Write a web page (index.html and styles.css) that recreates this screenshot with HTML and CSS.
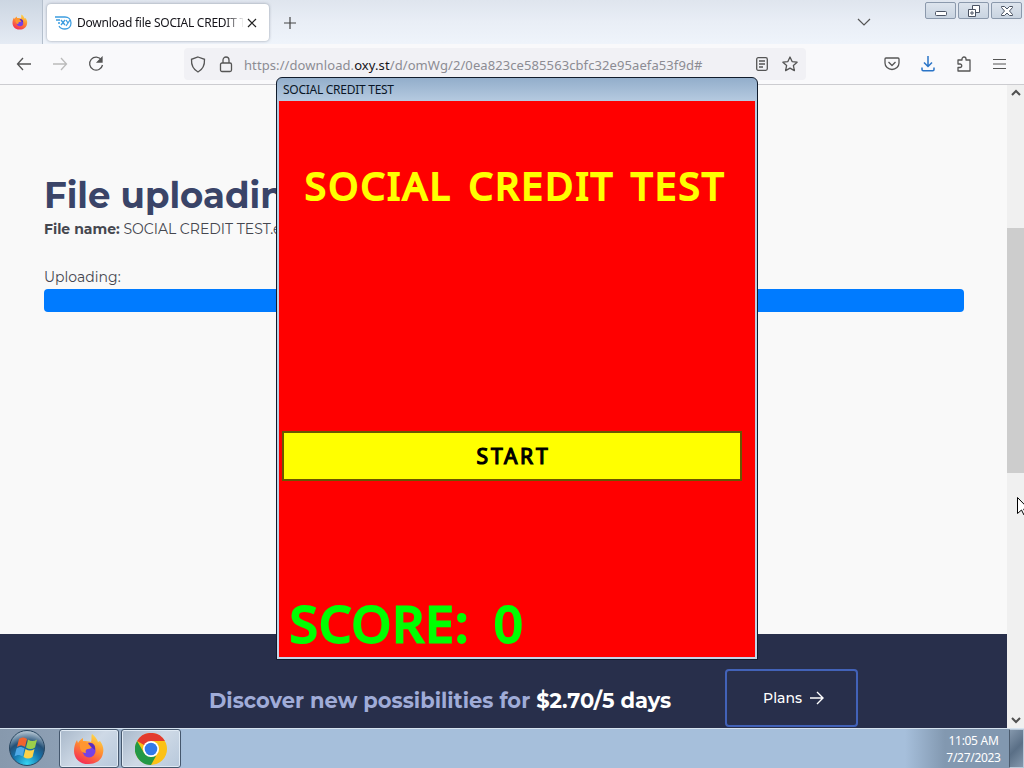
FILE: index.html
```
<!DOCTYPE html>
<html lang="en">

<head>
  <meta charset="UTF-8" />
  <meta name="viewport" content="width=device-width, initial-scale=1.0" />
  <title>Social Credit Test</title>
  <link rel="stylesheet" href="styles.css">
</head>

<body>
  <svg class="defs" width="0" height="0">
    <defs>
      <linearGradient id="flame" x1="0.8" y1="0" x2="0.3" y2="1">
        <stop offset="0" stop-color="#ffe14a" />
        <stop offset="0.45" stop-color="#ff9130" />
        <stop offset="1" stop-color="#f52b55" />
      </linearGradient>
      <symbol id="firefox" viewBox="0 0 32 32">
        <path fill="url(#flame)" d="M19 1c3 2 5 5 6 8l2-1c3 4 4 8 3 12-1 7-7 11-14 11C8 32 1 26 1 18c0-4 1-8 3-11l1 3c1-2 3-4 5-5v3c3 0 6 0 8 1 1-3 0-6 1-8z" />
        <circle cx="16" cy="18" r="6.5" fill="#7542e5" />
        <path fill="#ff9630" d="M7 10c3-2 7-1 9 2l4 1c-1 2-3 3-5 3-2 0-3 2-2 4-4 0-7-3-6-10z" />
        <path fill="#5b2bc0" d="M15 10c5-1 8 3 7 7l-4-3z" />
      </symbol>
    </defs>
  </svg>

  <div class="desktop">
    <div class="browser">
      <div class="tabbar">
        <div class="pinned"><svg width="16" height="16"><use href="#firefox" /></svg></div>
        <div class="tab">
          <svg width="17" height="16" viewBox="0 0 17 16" fill="none" stroke="#3c9de0" stroke-width="1.3">
            <path d="M0 2h10c3 0 6 2 6 6s-3 6-6 6c-3 0-5-1-6-3M1 5h4M3 8h2" />
            <path d="M6 5l4 5M10 5l-4 5M11 5l2 3M15 5l-4 6" />
          </svg>
          <span class="tab-title">Download file SOCIAL CREDIT TEST</span>
          <svg class="tab-close" width="10" height="10" viewBox="0 0 10 10" stroke="#222" stroke-width="1.2"><path d="M1 1l8 8M9 1l-8 8" /></svg>
        </div>
        <svg class="newtab" width="12" height="12" viewBox="0 0 12 12" stroke="#444" stroke-width="1.2"><path d="M6 0v12M0 6h12" /></svg>
        <svg class="alltabs" width="14" height="8" viewBox="0 0 14 8" fill="none" stroke="#555" stroke-width="1.2"><path d="M1 1l6 6 6-6" /></svg>
        <div class="winbtns">
          <span><svg width="12" height="12" viewBox="0 0 12 12"><rect x="0.5" y="6.5" width="11" height="4" rx="1" fill="#fff" stroke="#4a5363" /></svg></span>
          <span><svg width="12" height="12" viewBox="0 0 12 12" fill="#fff" stroke="#4a5363"><path d="M4.5.5h7v7h-7z" /><path d="M.5 4.5h7v7h-7zM3 7h2v2h-2z" /></svg></span>
          <span><svg width="12" height="12" viewBox="0 0 12 12" fill="#fff" stroke="#4a5363"><path d="M.5 1.5h3l2.5 2.5 2.5-2.5h3v1l-3 3.500 3 3.500v1h-3l-2.500-2.500-2.500 2.500h-3v-1l3-3.500-3-3.500z" /></svg></span>
        </div>
      </div>

      <div class="toolbar">
        <div class="nav">
          <svg width="16" height="14" viewBox="0 0 16 14" fill="none" stroke="#555" stroke-width="1.3"><path d="M15 7H1.500M7 1L1.500 7 7 13" /></svg>
          <svg width="16" height="14" viewBox="0 0 16 14" fill="none" stroke="#bbb" stroke-width="1.3"><path d="M1 7h13.500M9 1l5.500 6L9 13" /></svg>
          <svg width="16" height="16" viewBox="0 0 16 16" fill="none" stroke="#555" stroke-width="1.3"><path d="M13.500 4A6.500 6.500 0 1 0 14.500 9" /><path fill="#555" d="M14 1.500v4.500h-4.500z" /></svg>
        </div>
        <div class="urlbar">
          <svg width="16" height="17" viewBox="0 0 16 17" fill="none" stroke="#555" stroke-width="1.3"><path d="M8 1l6.500 2.300c.3 5.500-1.500 10-6.500 12.700C3 13.300 1.200 8.800 1.500 3.300z" /></svg>
          <svg width="14" height="17" viewBox="0 0 14 17" fill="none" stroke="#555" stroke-width="1.3"><rect x="1.5" y="7" width="11" height="8.5" rx="1.5" /><path d="M4 7V4a3 3 0 0 1 6 0v3" /></svg>
          <span class="url">https://download.<b>oxy.st</b>/d/omWg/2/0ea823ce585563cbfc32e95aefa53f9d#</span>
          <svg width="12" height="14" viewBox="0 0 12 14" fill="none" stroke="#555" stroke-width="1.3"><rect x="0.7" y="0.7" width="10.6" height="12.6" rx="1.5" /><path d="M3 4h6M3 7h6M3 10h4" /></svg>
          <svg width="16" height="16" viewBox="0 0 16 16" fill="none" stroke="#555" stroke-width="1.3" stroke-linejoin="round"><path d="M8 1l2.100 4.600 5 .6-3.700 3.400 1 5L8 12.100l-4.400 2.500 1-5L.9 6.200l5-.6z" /></svg>
        </div>
        <div class="tools">
          <svg width="16" height="14" viewBox="0 0 16 14" fill="none" stroke="#555" stroke-width="1.3" stroke-linejoin="round"><path d="M2 1h12q1 0 1 1v4a7 6.500 0 0 1-14 0V2q0-1 1-1z" /><path d="M4.500 5L8 8.500 11.500 5" /></svg>
          <svg width="14" height="16" viewBox="0 0 14 16" fill="none" stroke="#2a74c7" stroke-width="1.5"><path d="M7 0v10.500M3 6.500l4 4 4-4M1 11.500v2q0 1.200 1.200 1.200h9.600q1.200 0 1.200-1.200v-2" /></svg>
          <svg width="16" height="16" viewBox="0 0 16 16" fill="none" stroke="#555" stroke-width="1.3" stroke-linejoin="round"><path d="M2 6V4h4V3a2 2 0 0 1 4 0v1h4v11H2v-3.500h2a1.500 1.500 0 0 0 0-3.500H2z" /></svg>
          <svg width="13" height="12" viewBox="0 0 13 12" stroke="#555" stroke-width="1.2"><path d="M0 1.500h13M0 6h13M0 10.500h13" /></svg>
        </div>
      </div>

      <div class="view">
        <div class="page">
          <div class="upload">
            <h1>File uploading</h1>
            <p class="filename"><b>File name:</b> SOCIAL CREDIT TEST.exe</p>
            <p class="status">Uploading:</p>
            <div class="progress"></div>
          </div>
          <div class="promo">
            <p>Discover new possibilities for <b>$2.70/5 days</b></p>
            <a class="plans">Plans
              <svg width="14" height="14" viewBox="0 0 14 14" fill="none" stroke="#fff" stroke-width="1.4"><path d="M0 7h13M7 1l6 6-6 6" /></svg>
            </a>
          </div>
        </div>
        <div class="scrollbar">
          <svg width="10" height="7" viewBox="0 0 10 7" fill="none" stroke="#505050" stroke-width="2"><path d="M1 6l4-4 4 4" /></svg>
          <div class="thumb"></div>
          <svg width="10" height="7" viewBox="0 0 10 7" fill="none" stroke="#505050" stroke-width="2"><path d="M1 1l4 4 4-4" /></svg>
        </div>
      </div>
    </div>

    <div class="taskbar">
      <div class="start">
        <svg width="38" height="38" viewBox="0 0 38 38">
          <defs>
            <radialGradient id="orb" cx="0.5" cy="0.95" r="0.9">
              <stop offset="0" stop-color="#35d5f2" />
              <stop offset="0.45" stop-color="#1573ac" />
              <stop offset="0.7" stop-color="#245178" />
              <stop offset="1" stop-color="#a9bccb" />
            </radialGradient>
          </defs>
          <circle cx="19" cy="19" r="17.5" fill="url(#orb)" stroke="#294761" />
          <path fill="#f0652f" d="M11 10c3-2 5-2 8 0l-2 8c-3-2-5-2-8 0z" />
          <path fill="#9bcf4b" d="M20 10.500c3 2 6 2 9 0l-2 8c-3 2-6 2-9 0z" />
          <path fill="#4fa9e6" d="M8.500 19.500c3-2 5-2 8 0l-2 8c-3-2-5-2-8 0z" />
          <path fill="#fdd249" d="M17.500 20c3 2 6 2 9 0l-2 8c-3 2-6 2-9 0z" />
        </svg>
      </div>
      <div class="task"><svg width="32" height="32"><use href="#firefox" /></svg></div>
      <div class="task">
        <svg width="32" height="32" viewBox="0 0 32 32">
          <circle cx="16" cy="16" r="16" fill="#fbc116" />
          <path fill="#e33b2e" d="M16 16L2.100 8A16 16 0 0 1 29.900 8H16z" />
          <path fill="#229847" d="M2.100 8l7 12 6.900 4 5-1L16 32A16 16 0 0 1 2.100 8z" />
          <circle cx="16" cy="16" r="8" fill="#fff" />
          <circle cx="16" cy="16" r="6.3" fill="#3279e8" />
        </svg>
      </div>
      <div class="clock"><span>11:05 AM</span><span>7/27/2023</span></div>
      <div class="peek"></div>
    </div>

    <div class="popup">
      <div class="popup-title">SOCIAL CREDIT TEST</div>
      <div class="game">
        <h2>SOCIAL CREDIT TEST</h2>
        <button type="button" class="startbtn">START</button>
        <p class="score">SCORE: 0</p>
      </div>
    </div>

    <svg class="cursor" width="12" height="19" viewBox="0 0 12 19"><path fill="#fff" stroke="#000" d="M.5.5v16l4-3.500 2.500 5 2-1-2.300-5h5z" /></svg>
  </div>
</body>

</html>
```
FILE: styles.css
```
* {
  box-sizing: border-box;
}

body {
  margin: 0;
  font-family: "Noto Sans", sans-serif;
}

h1,
h2,
p {
  margin: 0;
}

svg {
  display: block;
  flex-shrink: 0;
}

.defs {
  position: absolute;
}

.desktop {
  position: relative;
  display: flex;
  flex-direction: column;
  width: 1024px;
  height: 768px;
  overflow: hidden;
}

.browser {
  display: flex;
  flex-direction: column;
  height: 728px;
}

/* tabs */
.tabbar {
  display: flex;
  height: 44px;
  background: linear-gradient(#dfe5ee, #e9eef6 50%, #eff4fb);
}

.pinned {
  display: flex;
  align-items: center;
  justify-content: center;
  width: 43px;
  padding-right: 3px;
  border-right: 1px solid #b4bfcc;
  background: linear-gradient(#ccd6e2, #e5ebf4);
}

.tab {
  display: flex;
  align-items: center;
  width: 222px;
  height: 37px;
  margin: 4px 0 0 4px;
  padding: 0 11px 0 8px;
  border-radius: 4px;
  background: #fff;
  box-shadow: 0 0 3px rgba(60, 70, 90, 0.5);
}

.tab-title {
  width: 166px;
  margin-left: 5px;
  overflow: hidden;
  white-space: nowrap;
  font-size: 12px;
  letter-spacing: -0.25px;
  color: #15141a;
  -webkit-mask-image: linear-gradient(to right, #000 148px, transparent 168px);
}

.tab-close {
  margin-left: 4px;
}

.newtab {
  margin: 17px 0 0 15px;
}

.alltabs {
  margin: 18px 54px 0 auto;
}

.winbtns {
  display: flex;
  gap: 2px;
  margin-right: 2px;
}

.winbtns span {
  display: flex;
  align-items: center;
  justify-content: center;
  width: 31px;
  height: 17px;
  margin-top: 2px;
  border: 1px solid #8b99ac;
  border-radius: 2px;
  background: linear-gradient(#dde4ed, #c9d4e1);
}

/* toolbar */
.toolbar {
  display: flex;
  align-items: center;
  height: 41px;
  border-bottom: 1px solid #ccccd0;
  background: #f9f9fb;
}

.nav {
  display: flex;
  align-items: center;
  gap: 20px;
  width: 184px;
  padding-left: 16px;
}

.urlbar {
  display: flex;
  align-items: center;
  width: 622px;
  height: 32px;
  padding: 0 8px 0 6px;
  border-radius: 4px;
  background: #f1f1f5;
}

.urlbar svg + svg {
  margin-left: 13px;
}

.url {
  flex: 1;
  margin-left: 11px;
  padding-top: 1px;
  font-size: 13px;
  letter-spacing: 0.09px;
  color: #8c8c93;
}

.url b {
  font-weight: normal;
  color: #15141a;
}

.url + svg {
  margin-right: 1px;
}

.tools {
  display: flex;
  align-items: center;
  gap: 21px;
  margin-left: 78px;
}

/* page */
.view {
  display: flex;
  flex: 1;
}

.page {
  display: flex;
  flex-direction: column;
  width: 1007px;
  font-family: Montserrat, Inter, sans-serif;
  background: #f9f9f9;
}

.page b {
  font-weight: 700;
}

.upload {
  height: 549px;
  padding: 88px 43px 0 44px;
  color: #45474f;
}

.upload h1 {
  font-size: 35.5px;
  line-height: 46px;
  color: #3a4468;
}

.filename,
.status {
  font-size: 14px;
  line-height: 21px;
}

.status {
  margin-top: 27px;
}

.progress {
  height: 23px;
  margin-top: 1px;
  border-radius: 4px;
  background: #007bff;
}

.promo {
  display: flex;
  flex: 1;
  padding: 35px 0 0 209px;
  background: #282f4b;
}

.promo p {
  width: 516px;
  padding-top: 18px;
  font-size: 21px;
  line-height: 28px;
  font-weight: bold;
  white-space: nowrap;
  color: #a0acd8;
}

.promo p b {
  color: #fff;
}

.plans {
  display: flex;
  align-items: center;
  justify-content: center;
  gap: 8px;
  width: 133px;
  height: 58px;
  padding-left: 4px;
  border: 2px solid #4262b8;
  border-radius: 4px;
  font-size: 14px;
  font-weight: 500;
  color: #fff;
}

.scrollbar {
  display: flex;
  flex-direction: column;
  align-items: center;
  width: 17px;
  padding: 4px 0;
  background: #f0f0f0;
}

.thumb {
  width: 17px;
  height: 245px;
  margin: 132px 0 auto;
  background: #cdcdcd;
}

/* taskbar */
.taskbar {
  display: flex;
  height: 40px;
  border-top: 1px solid #d5e2ef;
  background: linear-gradient(to right, #8799ad, #8d9fb4 58px, #a6bfdb 185px, #a6bfdb 905px, #8298b0 945px, #8298b0);
}

.start {
  width: 59px;
  padding-left: 8px;
}

.task {
  display: flex;
  align-items: center;
  justify-content: center;
  width: 60px;
  height: 39px;
  margin-right: 2px;
  border: 1px solid #45576d;
  border-radius: 3px;
  box-shadow: inset 0 0 0 1px #e0eaf4;
  background: linear-gradient(135deg, #a8b8ca, #ced9e6 50%, #b7c8db);
}

.clock {
  display: flex;
  flex-direction: column;
  align-items: center;
  width: 71px;
  margin-left: auto;
  padding-top: 3px;
  font-size: 12px;
  line-height: 17px;
  letter-spacing: -0.3px;
  color: #fff;
}

.peek {
  width: 15px;
  border: 1px solid #b9c8d8;
  border-left-color: #4b5b6e;
  background: linear-gradient(135deg, #8497ac, #5a6f86 50%, #8498ad);
}

/* game window */
.popup {
  position: absolute;
  top: 77px;
  left: 276px;
  display: flex;
  flex-direction: column;
  width: 482px;
  height: 583px;
  padding: 0 2px 2px;
  border: 1px solid #101b2b;
  border-radius: 6px 6px 0 0;
  background: linear-gradient(#93aecb, #b5cae0 23px, #c3d5e8);
}

.popup-title {
  height: 23px;
  padding-left: 4px;
  font-size: 12px;
  line-height: 23px;
  letter-spacing: -0.27px;
  color: #0a1626;
}

.game {
  display: flex;
  flex-direction: column;
  flex: 1;
  padding-top: 57px;
  font-family: "Comic Sans MS", "Noto Sans", sans-serif;
  background: #f00;
}

.game h2 {
  height: 54px;
  padding-left: 26px;
  font-size: 38px;
  font-weight: 400;
  line-height: 54px;
  letter-spacing: 2.6px;
  word-spacing: 4px;
  white-space: nowrap;
  color: #ff0;
  -webkit-text-stroke: 2.2px #ff0;
}

.startbtn {
  width: 460px;
  height: 50px;
  margin: 219px 0 0 3px;
  padding: 0 0 0 3px;
  border: 2px solid #6b5600;
  font-family: inherit;
  font-size: 21px;
  font-weight: 400;
  letter-spacing: 2.8px;
  color: #000;
  background: #ff0;
  -webkit-text-stroke: 1.2px #000;
}

.score {
  margin: 108px 0 0 11px;
  font-size: 50px;
  font-weight: 400;
  line-height: 68px;
  letter-spacing: 1.8px;
  word-spacing: 9px;
  white-space: nowrap;
  color: #0f0;
  -webkit-text-stroke: 3px #0f0;
}

.cursor {
  position: absolute;
  top: 497px;
  left: 1017px;
}
```
